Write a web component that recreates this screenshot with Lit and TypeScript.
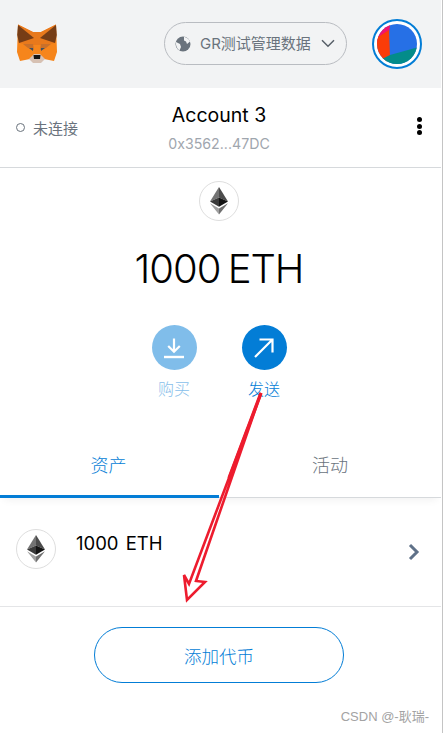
import { LitElement, html, css, svg } from "lit";
import { customElement } from "lit/decorators.js";

const ethIcon = (s: number) => svg`<svg width="${s}" height="${s}" viewBox="0 0 40 40" aria-hidden="true">
  <polygon points="20,6 11,20.5 20,16.5" fill="#747474"/>
  <polygon points="20,6 29,20.5 20,16.5" fill="#4c4c4c"/>
  <polygon points="11,20.5 20,16.5 20,25.8" fill="#3a3a3a"/>
  <polygon points="29,20.5 20,16.5 20,25.8" fill="#141414"/>
  <polygon points="11,22.3 20,33.5 20,27.5" fill="#a0a0a0"/>
  <polygon points="29,22.3 20,33.5 20,27.5" fill="#707070"/>
</svg>`;

@customElement("app-root")
export class AppRoot extends LitElement {
  static styles = css`
    :host { display: block; position: relative; width: 443px; height: 733px; background: #fff; overflow: hidden; font-family: Inter, "Noto Sans CJK SC", sans-serif; }
    .page { width: 441px; height: 733px; display: flex; flex-direction: column; }
    .top { flex: none; height: 88px; background: #f2f3f4; display: flex; align-items: center; padding: 0 19px 0 16px; }
    .fox { display: block; margin-top: -1px; }
    .net { margin-left: 106px; width: 181px; height: 41px; border: 1px solid #b9bcc1; border-radius: 22px; display: flex; align-items: center; margin-top: -1px; }
    .net svg.globe { margin-left: 10px; flex: none; }
    .net span { margin-left: 9px; font-size: 15px; color: #6a737d; white-space: nowrap; line-height: 20px; font-weight: 400; }
    .net svg.chev { margin-left: 10px; flex: none; }
    .avatar { margin-left: auto; display: block; margin-top: -1px; }
    .acct { flex: none; height: 79px; border-bottom: 1px solid #d6d9dc; display: grid; grid-template-columns: 1fr auto 1fr; align-items: center; padding: 0 19px 0 16px; }
    .status { display: flex; align-items: center; gap: 8px; font-size: 15px; color: #6a737d; margin-top: 0; }
    .dot { width: 7px; height: 7px; border: 1px solid #6a737d; border-radius: 50%; }
    .who { text-align: center; margin-top: 1px; }
    .name { font-size: 19.5px; line-height: 24px; color: #000; }
    .addr { font-size: 14.2px; line-height: 18px; color: #9fa6ae; margin-top: 8px; }
    .more { justify-self: end; width: 5px; display: flex; flex-direction: column; gap: 1.5px; margin-top: -3px; }
    .more i { display: block; width: 5px; height: 5px; border-radius: 50%; background: #000; }
    .hero { flex: none; width: 438px; display: flex; flex-direction: column; align-items: center; height: 262px; }
    .coin { box-sizing: border-box; flex: none; width: 40px; height: 40px; border: 1px solid #dedede; border-radius: 50%; display: flex; align-items: center; justify-content: center; background: #fff; }
    .coin svg { margin: -1px; }
    .hero .coin { margin-top: 13px; }
    .bal { margin-top: 20px; font-size: 40px; line-height: 56px; color: #000; font-weight: 300; letter-spacing: -1px; word-spacing: -3px; }
    .actions { display: flex; gap: 45px; margin-top: 28px; }
    .act { display: flex; flex-direction: column; align-items: center; width: 45px; font-size: 16px; line-height: 24px; color: #037dd6; font-family: "Noto Sans CJK SC", sans-serif; font-weight: 300; }
    .act.off { opacity: .5; }
    .circle { width: 45px; height: 45px; border-radius: 50%; background: #037dd6; display: flex; align-items: center; justify-content: center; margin-bottom: 6px; }
    .tabs { flex: none; display: flex; height: 67px; border-bottom: 1px solid #d6d9dc; box-shadow: 0 6px 8px -4px rgba(0,0,0,.06); }
    .tab { display: flex; align-items: center; justify-content: center; font-size: 18px; color: #6a737d; font-family: "Noto Sans CJK SC", sans-serif; font-weight: 300; }
    .tab.on { width: 217px; margin-right: 2px; color: #037dd6; margin-bottom: -1px; padding-bottom: 1px; box-sizing: border-box; position: relative; }
    .tab.on::after { content: ""; position: absolute; left: 0; right: -2px; bottom: 0; height: 3px; background: #037dd6; }
    .tab.off { width: 222px; }
    .asset { flex: none; height: 109px; box-sizing: border-box; border-bottom: 1px solid #e4e5e7; display: flex; align-items: center; padding: 0 21px 0 16px; }
    .asset .coin { margin-top: -7px; }
    .asset .label { margin-left: 20px; font-size: 18.5px; line-height: 24px; color: #000; margin-top: -19px; word-spacing: 2px; }
    .asset svg.go { margin-left: auto; margin-top: -1px; }
    .foot { width: 438px; display: flex; justify-content: center; padding-top: 20px; }
    .add { box-sizing: border-box; width: 250px; height: 56px; border: 1px solid #037dd6; border-radius: 28px; display: flex; align-items: center; justify-content: center; color: #037dd6; font-size: 17.5px; font-family: "Noto Sans CJK SC", sans-serif; font-weight: 300; }
    .mark { position: absolute; right: 14px; bottom: 8px; font-size: 13px; line-height: 16px; color: #a3a3a3; font-family: "Liberation Sans", "Noto Sans CJK SC", sans-serif; }
    .edge { position: absolute; top: 0; right: 0; width: 1px; height: 733px; background: #c4c4c4; }
    .arrow { position: absolute; left: 0; top: 0; pointer-events: none; }
  `;

  render() {
    return html`
      <div class="page">
        <div class="top">
          <svg class="fox" width="42" height="42" viewBox="0 0 42 42" aria-hidden="true">
            <polygon points="2,1.5 17,9 25,9 40,1.5 41,29 38,38 28,36 24,40 18,40 14,36 4,38 1,29" fill="#f6851b"/>
            <polygon points="2,1.5 17,9 25,9 40,1.5 39,20 27,22 15,22 3,20" fill="#e8791c"/>
            <polygon points="2,2 18,15 3,20 1.2,12" fill="#763d16"/>
            <polygon points="40,2 24,15 39,20 40.8,12" fill="#763d16"/>
            <polygon points="7,21 17,21 18,27 12,25" fill="#c9702a"/>
            <polygon points="35,21 25,21 24,27 30,25" fill="#c9702a"/>
            <polygon points="13,25 17,25 17,28" fill="#3d4f60"/>
            <polygon points="29,25 25,25 25,28" fill="#3d4f60"/>
            <polygon points="13,36 18,31 24,31 29,36 25,40 17,40" fill="#d7c1b3"/>
            <polygon points="17.5,32 24.5,32 24,36 18,36" fill="#161616"/>
          </svg>
          <div class="net">
            <svg class="globe" width="16" height="16" viewBox="0 0 16 16" aria-hidden="true">
              <circle cx="8" cy="8" r="7.5" fill="#6a737d"/>
              <path d="M9 .8c3 .6 5 2.2 6 4.7L12 8l-1-2.5L9 4.5zM1 6l4 2 1 3-1.5 3.5C2 12.5.6 10 1 6z" fill="#f2f3f4"/>
            </svg>
            <span>GR测试管理数据</span>
            <svg class="chev" width="14" height="9" viewBox="0 0 14 9" fill="none" aria-hidden="true"><path d="M1 1.2l6 6 6-6" stroke="#575f68" stroke-width="1.5"/></svg>
          </div>
          <svg class="avatar" width="50" height="50" viewBox="0 0 50 50" aria-hidden="true">
            <defs><clipPath id="av"><circle cx="25" cy="25" r="20"/></clipPath></defs>
            <circle cx="25" cy="25" r="24" fill="#fff" stroke="#037dd6" stroke-width="2"/>
            <g clip-path="url(#av)">
              <rect x="0" y="0" width="50" height="50" fill="#2670e6"/>
              <polygon points="0,0 19,0 17,14 0,30" fill="#f0136f"/>
              <polygon points="0,22 17,11 18,37 10,50 0,50" fill="#fb3c08"/>
              <polygon points="18,36 50,27 50,50 6,50 6,42" fill="#038c8a"/>
            </g>
          </svg>
        </div>
        <div class="acct">
          <div class="status"><span class="dot"></span><span>未连接</span></div>
          <div class="who">
            <div class="name">Account 3</div>
            <div class="addr">0x3562...47DC</div>
          </div>
          <div class="more"><i></i><i></i><i></i></div>
        </div>
        <div class="hero">
          <div class="coin">${ethIcon(40)}</div>
          <div class="bal">1000 ETH</div>
          <div class="actions">
            <div class="act off">
              <div class="circle">
                <svg width="22" height="22" viewBox="0 0 22 22" fill="none" aria-hidden="true"><path d="M11 1.5v13M5.2 9l5.8 5.8L16.8 9" stroke="#fff" stroke-width="2.2"/><path d="M1 20h20" stroke="#fff" stroke-width="2.4"/></svg>
              </div>
              <span>购买</span>
            </div>
            <div class="act">
              <div class="circle">
                <svg width="22" height="22" viewBox="0 0 22 22" fill="none" aria-hidden="true"><path d="M2 20L19.5 2.5M6.5 2.5h13v13" stroke="#fff" stroke-width="2.2"/></svg>
              </div>
              <span>发送</span>
            </div>
          </div>
        </div>
        <div class="tabs">
          <div class="tab on">资产</div>
          <div class="tab off">活动</div>
        </div>
        <div class="asset">
          <div class="coin">${ethIcon(40)}</div>
          <div class="label">1000 ETH</div>
          <svg class="go" width="12" height="18" viewBox="0 0 12 18" fill="none" aria-hidden="true"><path d="M2 2l7 7-7 7" stroke="#5f7188" stroke-width="3"/></svg>
        </div>
        <div class="foot"><div class="add">添加代币</div></div>
      </div>
      <div class="mark">CSDN @-耿瑞-</div>
      <div class="edge"></div>
      <svg class="arrow" width="443" height="733" viewBox="0 0 443 733" fill="none" aria-hidden="true">
        <polygon points="261,393 189,584 184,575 187,600 205,582 196,581" stroke="#ed1c2e" stroke-width="2.6"/>
        <path d="M261,393L229,478" stroke="#ed1c2e" stroke-width="3.4"/>
      </svg>
    `;
  }
}
